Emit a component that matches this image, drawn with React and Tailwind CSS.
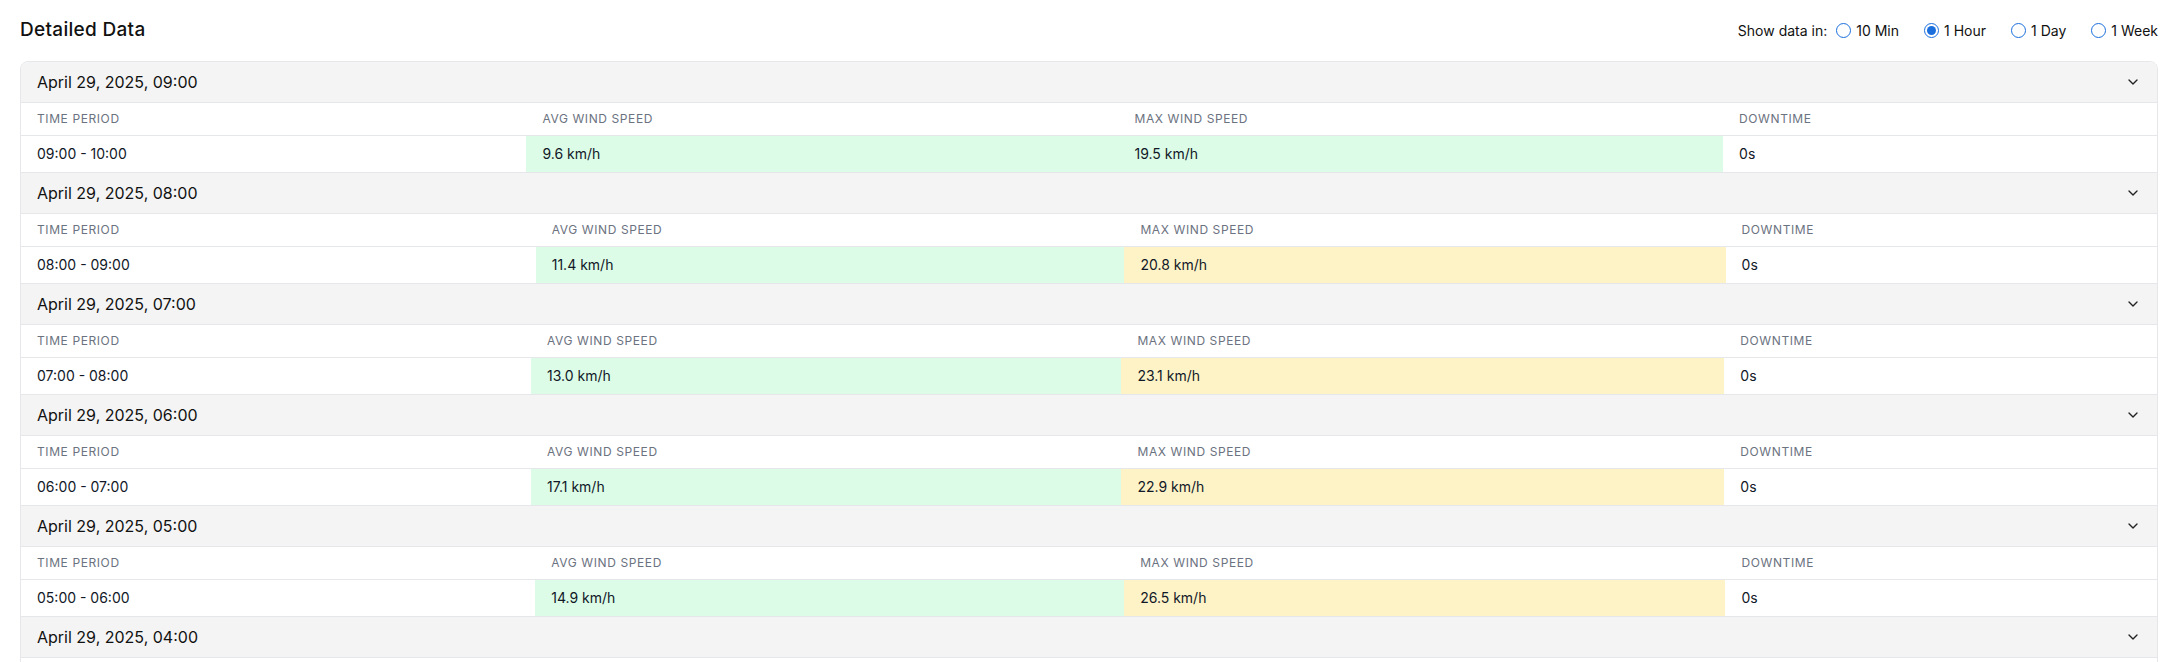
import React, { useState } from 'react';
import { ChevronDown } from 'lucide-react';

const groups = [
  { label: 'April 29, 2025, 09:00', period: '09:00 - 10:00', avg: 9.6, max: 19.5, downtime: '0s' },
  { label: 'April 29, 2025, 08:00', period: '08:00 - 09:00', avg: 11.4, max: 20.8, downtime: '0s' },
  { label: 'April 29, 2025, 07:00', period: '07:00 - 08:00', avg: 13.0, max: 23.1, downtime: '0s' },
  { label: 'April 29, 2025, 06:00', period: '06:00 - 07:00', avg: 17.1, max: 22.9, downtime: '0s' },
  { label: 'April 29, 2025, 05:00', period: '05:00 - 06:00', avg: 14.9, max: 26.5, downtime: '0s' },
  { label: 'April 29, 2025, 04:00', period: '04:00 - 05:00', avg: 12.8, max: 21.6, downtime: '0s' },
];

const options = ['10 Min', '1 Hour', '1 Day', '1 Week'];

const speedBg = (v) => (v < 20 ? 'bg-[#dcfce7]' : 'bg-[#fef3c7]');

const Radio = ({ checked }) => (
  <span className="flex items-center justify-center w-[15px] h-[15px] rounded-full border border-[#1a6fdc] bg-white">
    {checked && <span className="w-[9px] h-[9px] rounded-full bg-[#1a6fdc]" />}
  </span>
);

const App = () => {
  const [interval, setInterval] = useState('1 Hour');

  return (
    <div className="min-h-screen bg-white pl-5 pr-[18px] font-['Inter',sans-serif] text-[#111827]">
      <div className="flex items-center justify-between h-[61px]">
        <h2 className="text-[19px] font-medium text-[#111] tracking-[0.3px]">Detailed Data</h2>
        <div className="flex items-center text-sm text-[#111]">
          <span className="mr-[9px]">Show data in:</span>
          {options.map((opt, i) => (
            <label
              key={opt}
              onClick={() => setInterval(opt)}
              className={`flex items-center gap-[5px] cursor-pointer ${i < options.length - 1 ? 'mr-[25px]' : ''}`}
            >
              <Radio checked={interval === opt} />
              <span>{opt}</span>
            </label>
          ))}
        </div>
      </div>

      <div className="border border-[#e5e7eb] rounded-lg overflow-hidden">
        {groups.map((g) => (
          <div key={g.label}>
            <div className="flex items-center justify-between h-[41px] px-4 bg-[#f4f4f4] border-b border-[#e5e7eb]">
              <span className="text-base text-[#111]">{g.label}</span>
              <ChevronDown size={16} strokeWidth={2} className="text-[#222]" />
            </div>
            <table className="w-full border-collapse">
              <thead>
                <tr className="border-b border-[#e5e7eb]">
                  {['Time Period', 'Avg Wind Speed', 'Max Wind Speed', 'Downtime'].map((col) => (
                    <th
                      key={col}
                      className="px-4 py-2 text-left text-xs font-normal text-[#6b7280] uppercase tracking-wider leading-4"
                    >
                      {col}
                    </th>
                  ))}
                </tr>
              </thead>
              <tbody>
                <tr className="text-sm border-b border-[#e5e7eb]">
                  <td className="px-4 py-2 whitespace-nowrap">{g.period}</td>
                  <td className={`px-4 py-2 whitespace-nowrap ${speedBg(g.avg)}`}>{g.avg.toFixed(1)} km/h</td>
                  <td className={`px-4 py-2 whitespace-nowrap ${speedBg(g.max)}`}>{g.max.toFixed(1)} km/h</td>
                  <td className="px-4 py-2 whitespace-nowrap">{g.downtime}</td>
                </tr>
              </tbody>
            </table>
          </div>
        ))}
      </div>
    </div>
  );
};

export default App;
